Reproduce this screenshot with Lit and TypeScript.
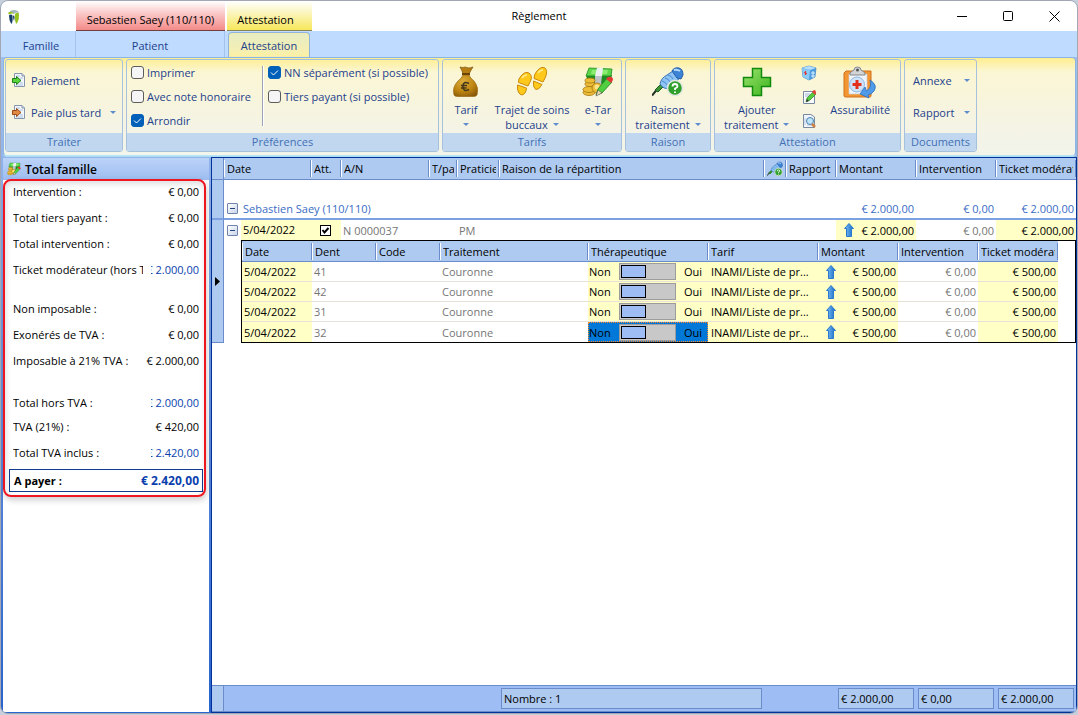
import { LitElement, html, css, svg, nothing } from "lit";
import { customElement, property } from "lit/decorators.js";
import { classMap } from "lit/directives/class-map.js";

const icons: Record<string, any> = {
  logo: svg`<svg width="12" height="16" viewBox="0 0 12 16">
    <path d="M1 4Q2 1 6 1Q10 1 11 4L8 3.500L6 5L3 3Z" fill="#a3b5bf"/>
    <path d="M0 4Q3 1.500 6 4.500Q3 4 1 5.500Z" fill="#95c11f"/>
    <path d="M7 5Q10 2.500 11 5Q11.500 10 9 14.500H8Q6 9 7 5Z" fill="#95c11f"/>
    <path d="M1 6.500Q3 4.500 4.500 6.500Q5 11 4 14.500H3Q1 11 1 6.500Z" fill="#123a63"/>
    <path d="M5 6.500Q6.500 6 6.500 9L6 12Q4.800 9 5 6.500Z" fill="#123a63"/></svg>`,
  pay: svg`<svg width="14" height="14" viewBox="0 0 14 14">
    <path d="M2.500.5H10L12.500 3V13.500H2.500Z" fill="#f4f8fd" stroke="#8796ad"/>
    <path d="M10 .5V3H12.500" fill="#cbd8ea" stroke="#8796ad"/>
    <path d="M4 3H8M8 5H11M8 10H11M4 12H11" stroke="#a9c2e2"/>
    <path d="M.500 5.500H4.500V3.500L9 7.500L4.500 11.500V9.500H.500Z" fill="#5ad43a" stroke="#207f18"/></svg>`,
  later: svg`<svg width="14" height="14" viewBox="0 0 14 14">
    <path d="M2.500.5H10L12.500 3V13.500H2.500Z" fill="#f4f8fd" stroke="#8796ad"/>
    <path d="M10 .5V3H12.500" fill="#cbd8ea" stroke="#8796ad"/>
    <path d="M4 3H8M8 5H11M8 10H11M4 12H11" stroke="#a9c2e2"/>
    <path d="M.500 5.500H4.500V3.500L9 7.500L4.500 11.500V9.500H.500Z" fill="#e08a45" stroke="#9a4a17"/></svg>`,
  bag: svg`<svg width="32" height="32" viewBox="0 0 32 32">
    <defs><radialGradient id="bg" cx=".4" cy=".3" r=".8"><stop offset="0" stop-color="#dcae3c"/><stop offset=".6" stop-color="#bd830f"/><stop offset="1" stop-color="#86560a"/></radialGradient></defs>
    <path d="M10 1Q13 2 15 1Q19 3 23 1Q21 4 19 8H13Q12 4 10 1Z" fill="#b57d12" stroke="#7d500a" stroke-width=".7"/>
    <path d="M13 9H19Q20 12 24 15Q29 21 27 29Q26 30.500 23 30.500H8Q5 30.500 4 29Q2 21 8 15Q12 12 13 9Z" fill="url(#bg)" stroke="#9a670c" stroke-width=".7"/>
    <path d="M12 8H20" stroke="#6b4407" stroke-width="2"/>
    <path d="M19 17.500Q13 14.500 13 20.500Q13 26.500 19 23.500M11 19.500H17M11 22H16.500" fill="none" stroke="#453719" stroke-width="1.500"/></svg>`,
  feet: svg`<svg width="32" height="32" viewBox="0 0 32 32">
    <g fill="#ffc91c" stroke="#c98a0a" stroke-width="1">
    <path d="M5 10Q9 5 13 7Q17 10 14.500 15L12 20L2.500 16.500Q2 13 5 10Z"/>
    <path d="M1.500 19L10.500 22Q10 28 6 29Q1 28 1.500 19Z"/>
    <path d="M21 5Q25 0 29 2Q32 5 29.500 11L27 16L18 12.500Q18 8 21 5Z"/>
    <path d="M17.500 15L26 18.500Q23 24 20 23.500Q17 22 17.500 15Z"/></g>
    <path d="M6 12Q8 9 11 9M22 7Q24 4 27 4" fill="none" stroke="#ffe98a" stroke-width="1.500"/></svg>`,
  cash: svg`<svg width="32" height="32" viewBox="0 0 32 32">
    <path d="M4 10L30 9L28 17L8 19Z" fill="#1d8c22"/>
    <path d="M7 2L30 3L29 10L4 10Z" fill="#5dd84a" stroke="#1f8a22" stroke-width=".8"/>
    <path d="M10 4H26L25 8H9Z" fill="#8ceb72"/>
    <path d="M15 2H21L20 10H13Z" fill="#eceff0"/><path d="M13 10H20L19 18H13Z" fill="#bcc3c6"/>
    <g fill="#edbd38" stroke="#a67610" stroke-width=".8">
    <ellipse cx="7" cy="26.500" rx="6" ry="3"/><ellipse cx="7" cy="23.500" rx="6" ry="3"/>
    <ellipse cx="8" cy="18" rx="5" ry="2.500"/><ellipse cx="8" cy="14.500" rx="5" ry="2.500"/><circle cx="15" cy="22" r="5"/></g>
    <circle cx="15" cy="21" r="2.500" fill="#ffe48a"/>
    <path d="M14 29L16 23L25 12L30 16L20 27Z" fill="#51cf40" stroke="#1d8022" stroke-width=".8"/>
    <path d="M14 30L16 24L20 27Z" fill="#e9d9b0" stroke="#555" stroke-width=".6"/>
    <path d="M24 13L26 11Q31 10 31 14L29 17Z" fill="#e23a34"/></svg>`,
  syringe: svg`<svg width="32" height="32" viewBox="0 0 32 32">
    <path d="M0 29.500L7 21" stroke="#222f22" stroke-width="2"/>
    <path d="M3 24L9 18L12 20L6 26Z" fill="#3c9434" stroke="#1b5c1d"/>
    <path d="M8 18Q9 12 15 9L21 5L29 11L17 22Q12 24 8 18Z" fill="#8ec4f4" stroke="#3b74b8"/>
    <path d="M20 5Q22 1 27 2Q31 3 31 9L29 13L25 12Z" fill="#3c83d6" stroke="#245ea8"/>
    <path d="M22 4Q25 3 28 5" fill="none" stroke="#b5dcfb" stroke-width="2"/>
    <path d="M13 12Q17 13 18 16M16 9Q20 10 21 13M10 15Q14 16 15 19" fill="none" stroke="#4a8bd0" stroke-width="1"/>
    <circle cx="23" cy="22" r="7.500" fill="#2fa02b" stroke="#e2e5e2" stroke-width="1.500"/>
    <path d="M20.500 20.500Q20.500 18 23 18Q25.500 18 25.500 20.500Q25.500 21.500 23 22.500V24M23 25.500V27" fill="none" stroke="#fff" stroke-width="1.800"/></svg>`,
  plus: svg`<svg width="32" height="32" viewBox="0 0 32 32">
    <defs><linearGradient id="pg" x1="0" y1="0" x2="1" y2="1"><stop offset="0" stop-color="#9be36c"/><stop offset="1" stop-color="#3cb31d"/></linearGradient></defs>
    <path d="M11.500 2.500H20.500V11.500H29.500V20.500H20.500V29.500H11.500V20.500H2.500V11.500H11.500Z" fill="url(#pg)" stroke="#118a0e" stroke-width="1.500"/></svg>`,
  cube: svg`<svg width="16" height="16" viewBox="0 0 16 16">
    <path d="M1 3L8 1L15 3L14 12L8 15L2 12Z" fill="#4d9be0" stroke="#2f78bf" stroke-width=".6"/>
    <path d="M1 3L8 1L15 3L9 5Z" fill="#b4defa"/><path d="M1 3L9 5L8 15L2 12Z" fill="#8ccaf6"/>
    <path d="M4.500 6V10M3 7.500L6 8.500" stroke="#e03838" stroke-width="1.200"/>
    <path d="M10 8H14M10 11H14M12 6V13" stroke="#d7effd"/></svg>`,
  edit: svg`<svg width="16" height="16" viewBox="0 0 16 16">
    <path d="M2.500 2.500H13.500V14.500H2.500Z" fill="#f7f9fc" stroke="#7788a0"/>
    <path d="M4 5H9M4 7H8" stroke="#9fb6d6"/>
    <path d="M5 13L6 9L12 3L15 5L9 11Z" fill="#58cc3f" stroke="#278a20" stroke-width=".7"/>
    <path d="M11 3L13 1Q15 1 15 4L14 6Z" fill="#df4337"/><path d="M5 13L6 10L8 12Z" fill="#333"/></svg>`,
  preview: svg`<svg width="16" height="16" viewBox="0 0 16 16">
    <path d="M2.500 1.500H10L13.500 4V14.500H2.500Z" fill="#f0f5fc" stroke="#7788a0"/>
    <path d="M4 5V12M6 12H11" stroke="#b8cbe4"/>
    <circle cx="9" cy="8" r="3.500" fill="#bfe3f8" stroke="#4b7fae"/>
    <path d="M11 11L14 14" stroke="#cf8040" stroke-width="2.500"/></svg>`,
  clip: svg`<svg width="34" height="34" viewBox="0 0 34 34">
    <path d="M3 5H28V30Q28 31 26 31H3Q1 31 1 30V7Z" fill="#f39530" stroke="#cf711c"/>
    <path d="M6 8H24V28H6Z" fill="#f1f5fa" stroke="#c9ccd2" stroke-width=".7"/>
    <path d="M7 9V7Q9 5 11 4Q11 1 14.500 1Q18 1 18 4Q20 5 22 7V9Z" fill="#d2d4d6" stroke="#85898d"/>
    <circle cx="14.500" cy="4" r="1.500" fill="#555"/>
    <circle cx="14" cy="18.500" r="7.500" fill="#cfe3f8" stroke="#8fb7e4"/>
    <path d="M14 14V23M9.500 18.500H18.500" stroke="#e2301b" stroke-width="3"/>
    <path d="M27 14Q35 19 31 25Q29 28 25 29L26 32L17 28L22 21L23.500 25Q29 22 27 14Z" fill="#4f9bea" stroke="#2b6dbb" stroke-width=".8"/></svg>`,
  up: svg`<svg width="10" height="14" viewBox="0 0 10 14">
    <defs><linearGradient id="ug"><stop offset="0" stop-color="#7cc3fb"/><stop offset="1" stop-color="#1767c2"/></linearGradient></defs>
    <path d="M5 .5L9.500 5.500H7.500V13.500H2.500V5.500H.500Z" fill="url(#ug)" stroke="#2a79cc"/></svg>`,
};

const sized = (name: string, size: number) =>
  html`<span class="scaled" style="--s:${size}px">${icons[name]}</span>`;
const caret = svg`<svg class="caret" width="6" height="3" viewBox="0 0 6 3"><path d="M0 0H6L3 3Z" fill="#5f8ccc"/></svg>`;

const base = css`
  * { box-sizing: border-box; }
  button, input, select { font: inherit; color: inherit; margin: 0; }
  button { border: 0; padding: 0; background: none; }
  svg { display: block; flex: none; }
  .scaled { display: block; flex: none; }
  .scaled svg { width: var(--s); height: var(--s); }
`;

@customElement("pay-ribbon")
class PayRibbon extends LitElement {
  static styles = [base, css`
    :host { display: block; padding: 0 1px 0 2px; color: #1d418c; }
    .ribbon { display: flex; gap: 3px; height: 99px; padding: 1px 1px 3px;
      border: 1px solid #8ab4e4; border-bottom-color: #b9e6f7; border-radius: 4px; box-shadow: 0 1px 1px #b0e0f4;
      background: linear-gradient(#feee90, #fbf6d4 14px, #f3f3e8 80px, #f2f5ea); }
    .group { display: flex; flex-direction: column; flex: none; border: 1px solid #a6c1dc; border-radius: 3px; overflow: hidden; }
    .body { flex: 1; display: flex; }
    .caption { height: 18px; line-height: 17px; text-align: center; background: #c1d7f0; color: #4270b4; }
    .traiter { width: 118px; } .prefs { width: 313px; } .tarifs { width: 180px; }
    .raison { width: 86px; } .attest { width: 187px; } .docs { width: 73px; }
    .stack { flex-direction: column; padding: 4px 6px; }
    .row { display: flex; align-items: center; height: 32px; width: 100%; white-space: nowrap; }
    .row .text { margin-left: 5px; }
    .docs .row .text { margin-left: 2px; }
    .row .caret { margin-left: auto; }
    .checks { display: flex; flex-direction: column; padding-left: 4px; }
    .checks.first { width: 135px; }
    .check { display: flex; align-items: center; gap: 3px; height: 24px; white-space: nowrap; }
    .check input { appearance: none; width: 13px; height: 13px; border: 1px solid #5c5c5c; border-radius: 3px; background: #f5f5f5; }
    .check input:checked { border-color: #005fb8; background: #005fb8
      url("data:image/svg+xml,%3Csvg xmlns='http://www.w3.org/2000/svg' viewBox='0 0 11 11'%3E%3Cpath d='M2 5.500L4.500 8L9 3.500' fill='none' stroke='white'/%3E%3C/svg%3E"); }
    .rule { width: 2px; margin: 6px 0 7px; border-left: 1px solid #9aa3b5; background: #fff; }
    .big { display: flex; flex-direction: column; align-items: center; padding-top: 6px; line-height: 15px; white-space: nowrap; }
    .big .pic { height: 36px; }
    .line { display: flex; align-items: center; gap: 5px; height: 15px; }
    .tarifs .body { padding: 0 2px; }
    .w42 { width: 42px; } .w90 { width: 90px; } .w84 { width: 84px; } .w80 { width: 80px; }
    .small { display: flex; flex-direction: column; width: 22px; padding-top: 1px; }
    .small button { display: flex; align-items: center; justify-content: center; height: 24px; }
  `];

  big(icon: string, width: string, first: string, second = "", arrow = true) {
    return html`<button class="big ${width}"><span class="pic">${icons[icon]}</span><span>${first}</span>
      <span class="line">${second ? html`<span>${second}</span>` : nothing}${arrow ? caret : nothing}</span></button>`;
  }
  check(label: string, on = false) {
    return html`<label class="check"><input type="checkbox" .checked=${on}>${label}</label>`;
  }
  row(label: string, arrow: boolean, icon = "") {
    return html`<button class="row">${icon ? icons[icon] : nothing}<span class="text">${label}</span>${arrow ? caret : nothing}</button>`;
  }
  render() {
    return html`<div class="ribbon">
      <section class="group traiter"><div class="body stack">
        ${this.row("Paiement", false, "pay")}${this.row("Paie plus tard", true, "later")}
      </div><div class="caption">Traiter</div></section>
      <section class="group prefs"><div class="body">
        <div class="checks first">${this.check("Imprimer")}${this.check("Avec note honoraire")}${this.check("Arrondir", true)}</div>
        <div class="rule"></div>
        <div class="checks">${this.check("NN séparément (si possible)", true)}${this.check("Tiers payant (si possible)")}</div>
      </div><div class="caption">Préférences</div></section>
      <section class="group tarifs"><div class="body">
        ${this.big("bag", "w42", "Tarif")}${this.big("feet", "w90", "Trajet de soins", "buccaux")}${this.big("cash", "w42", "e-Tar")}
      </div><div class="caption">Tarifs</div></section>
      <section class="group raison"><div class="body">
        ${this.big("syringe", "w84", "Raison", "traitement")}
      </div><div class="caption">Raison</div></section>
      <section class="group attest"><div class="body">
        ${this.big("plus", "w84", "Ajouter", "traitement")}
        <div class="small">
          <button aria-label="Mutuelle">${icons.cube}</button>
          <button aria-label="Modifier">${icons.edit}</button>
          <button aria-label="Aperçu">${icons.preview}</button>
        </div>
        ${this.big("clip", "w80", "Assurabilité", "", false)}
      </div><div class="caption">Attestation</div></section>
      <section class="group docs"><div class="body stack">
        ${this.row("Annexe", true)}${this.row("Rapport", true)}
      </div><div class="caption">Documents</div></section>
    </div>`;
  }
}

@customElement("family-total")
class FamilyTotal extends LitElement {
  static styles = [base, css`
    :host { display: flex; flex-direction: column; background: #fff; color: #000; }
    .head { display: flex; align-items: center; gap: 4px; height: 22px; margin: 0; padding-left: 4px;
      font-size: 12px; font-weight: 600; background: linear-gradient(#bcd3f8, #9dbdf0); }
    .frame { position: relative; padding: 0 6px 5px; }
    .mark { position: absolute; inset: -1px 3px 0 0; border: 2px solid #ee1620; border-radius: 8px;
      box-shadow: 1px 3px 6px #0003, inset 1px 3px 6px #0002; pointer-events: none; }
    .item { display: flex; justify-content: space-between; height: 26px; line-height: 24px; padding: 0 4px; white-space: nowrap; }
    .item.tight { height: 24px; }
    .gap-s { margin-top: 13px; } .gap-l { margin-top: 16px; }
    .label { max-width: 130px; overflow: hidden; }
    .value { display: flex; justify-content: flex-end; }
    a.value { width: 48px; overflow: hidden; color: #0a3fae; text-decoration: none; }
    .pay { display: flex; justify-content: space-between; height: 23px; line-height: 21px; margin-top: 2px; padding: 0 3px 0 4px;
      border: 1px solid #0f3c8e; font-weight: 700; }
    .pay .sum { color: #0a3fae; font-size: 12px; }
  `];
  item(label: string, value: string, link = false, cls = "") {
    return html`<div class="item ${cls}"><span class="label">${label}</span>${link
      ? html`<a class="value" href="#"><span>${value}</span></a>` : html`<span class="value">${value}</span>`}</div>`;
  }
  render() {
    return html`<h2 class="head">${sized("cash", 14)}Total famille</h2>
      <div class="frame">
        ${this.item("Intervention :", "€ 0,00")}
        ${this.item("Total tiers payant :", "€ 0,00")}
        ${this.item("Total intervention :", "€ 0,00")}
        ${this.item("Ticket modérateur (hors TVA) :", "€ 2.000,00", true)}
        ${this.item("Non imposable :", "€ 0,00", false, "gap-s")}
        ${this.item("Exonérés de TVA :", "€ 0,00")}
        ${this.item("Imposable à 21% TVA :", "€ 2.000,00")}
        ${this.item("Total hors TVA :", "€ 2.000,00", true, "gap-l tight")}
        ${this.item("TVA (21%) :", "€ 420,00")}
        ${this.item("Total TVA inclus :", "€ 2.420,00", true)}
        <div class="pay"><span>A payer :</span><span class="sum">€ 2.420,00</span></div>
        <div class="mark"></div>
      </div>`;
  }
}

@customElement("treatment-grid")
class TreatmentGrid extends LitElement {
  @property({ type: Array }) teeth = ["41", "42", "31", "32"];
  static styles = [base, css`
    :host { display: flex; flex-direction: column; background: #fff; border: 1px solid #00339a; color: #000; min-width: 0; }
    .scroll { flex: 1; min-height: 0; overflow: hidden; }
    table { border-collapse: separate; border-spacing: 0; table-layout: fixed; width: 100%; }
    th, td { padding: 0 2px; font-weight: 400; text-align: left; white-space: nowrap; overflow: hidden; }
    thead th { height: 22px; padding: 0 3px; border-bottom: 1px solid #6a8ccb;
      background: linear-gradient(#6a8ccb, #6a8ccb) right 0 center / 1px 17px no-repeat,
        linear-gradient(#fff, #fff) left 0 center / 1px 17px no-repeat, #aecaf0; }
    .clip { display: block; overflow: hidden; }
    .inner thead th { height: 21px; }
    .sel { padding: 0; border-right: 1px solid #6a8ccb; background: #aecaf0; vertical-align: middle; text-align: center; }
    thead .sel { background: #aecaf0; }
    .sel.bar { border-bottom: 2px solid #7ba1e2; }
    .sel.end { border-bottom: 1px solid #6a8ccb; }
    .sel svg { margin: 0 auto; }
    .group td { height: 40px; border-bottom: 2px solid #7ba1e2; padding-top: 18px; color: #3a6cc4; }
    .group td.sel { padding-top: 0; }
    .master td { height: 20px; }
    .num { text-align: right; }
    td.num { padding-right: 2px; }
    .exp, .date { display: flex; align-items: center; gap: 5px; padding-left: 1px; }
    .minus { display: block; flex: none; width: 11px; height: 11px; border: 1px solid #6f83ad; border-radius: 1px;
      background: linear-gradient(#26457c, #26457c) center / 5px 1px no-repeat, linear-gradient(135deg, #fff, #c9d5ea); }
    .y { background: #ffffc6; }
    .grey { color: #767676; }
    .date { gap: 3px; height: 20px; padding-left: 3px; }
    .date .y { flex: 1; line-height: 20px; padding-left: 2px; }
    td.flush { padding-left: 0; padding-right: 0; }
    .att input { appearance: none; display: block; width: 11px; height: 11px; margin: 0 0 0 7px; border: 1px solid #000; background: #fff
      url("data:image/svg+xml,%3Csvg xmlns='http://www.w3.org/2000/svg' viewBox='0 0 9 9'%3E%3Cpath d='M1.500 4L3.500 6.500L7.500 2' fill='none' stroke='black' stroke-width='2'/%3E%3C/svg%3E"); }
    .amount { display: flex; align-items: center; justify-content: space-between; padding-left: 6px; }
    .box { padding: 0 0 0 17px; border: 0; }
    .inner { border: 1px solid #000; padding-right: 17px; }
    .inner td { height: 20px; border-bottom: 1px solid #e6e2da; padding: 0 2px; }
    .inner tr:last-child td { border-bottom: 0; }
    .inner td.pad { padding-left: 3px; }
    .inner td.switch { padding: 0; }
    .toggle { display: flex; align-items: center; height: 19px; padding: 0 5px 0 0; border: 1px solid transparent; }
    .toggle span:last-child { margin-left: auto; }
    .toggle input { appearance: none; display: flex; align-items: center; flex: none; width: 57px; height: 17px; margin-left: 8px; padding: 1px; border: 1px solid #9c9c9c; background: #c8c8c8; }
    .toggle input::before { content: ""; flex: none; box-sizing: border-box; width: 25px; height: 13px; border: 1px solid #000; background: #9fbdf5; }
    .active .toggle { background: #0078d7; border: 1px dotted #ff8728; height: 20px; }
    .foot { display: grid; grid-template-columns: 12px 275px 1fr 72px 80px 80px 80px; flex: none; height: 27px;
      border-top: 1px solid #6a8ccb; border-bottom: 1px solid #6a8ccb; background: #9fbdf5; }
    .foot .corner { background: #aecaf0; border-right: 1px solid #6a8ccb; }
    .total { margin: 2px; padding-left: 2px; line-height: 19px; border: 1px solid #6a8ccb; background: #aecaf0; }
  `];
  render() {
    const amount = (v: string) => html`<div class="amount">${icons.up}<span>${v}</span></div>`;
    const head = (label: string) => html`<th><span class="clip">${label}</span></th>`;
    return html`<div class="scroll"><table>
      <colgroup><col style="width:12px"><col style="width:87px"><col style="width:30px"><col style="width:88px"><col style="width:28px"><col style="width:42px"><col>
        <col style="width:22px"><col style="width:50px"><col style="width:80px"><col style="width:80px"><col style="width:80px"></colgroup>
      <thead><tr><th class="sel"></th>${["Date", "Att.", "A/N", "T/patient", "Praticien", "Raison de la répartition"].map(head)}
        <th aria-label="Raison">${sized("syringe", 16)}</th>${["Rapport", "Montant", "Intervention", "Ticket modérateur"].map(head)}</tr></thead>
      <tbody>
        <tr class="group"><td class="sel bar"></td><td colspan="8"><div class="exp"><button class="minus" aria-label="Réduire"></button>Sebastien Saey (110/110)</div></td>
          <td class="num">€ 2.000,00</td><td class="num">€ 0,00</td><td class="num">€ 2.000,00</td></tr>
        <tr class="master"><td class="sel end" rowspan="2"><svg width="5" height="9" viewBox="0 0 5 9"><path d="M0 0L5 4.500L0 9Z"/></svg></td>
          <td class="flush"><div class="date"><button class="minus" aria-label="Réduire"></button><span class="y">5/04/2022</span></div></td>
          <td class="y att"><input type="checkbox" checked aria-label="Attestation"></td><td class="grey">N 0000037</td><td></td><td class="grey">PM</td><td></td><td></td><td></td>
          <td class="y num">${amount("€ 2.000,00")}</td><td class="num grey">€ 0,00</td><td class="y num">€ 2.000,00</td></tr>
        <tr><td class="box" colspan="11"><div class="inner"><table>
          <colgroup><col style="width:70px"><col style="width:64px"><col style="width:64px"><col><col style="width:120px"><col style="width:110px"><col style="width:80px"><col style="width:80px"><col style="width:80px"></colgroup>
          <thead><tr>${["Date", "Dent", "Code", "Traitement", "Thérapeutique", "Tarif", "Montant", "Intervention", "Ticket modérateur"].map(head)}</tr></thead>
          <tbody>${this.teeth.map((t, i) => html`<tr class=${classMap({ active: i === 3 })}>
            <td class="y">5/04/2022</td><td class="grey">${t}</td><td></td><td class="grey">Couronne</td>
            <td class="y switch"><label class="toggle"><span>Non</span><input type="checkbox" role="switch"><span>Oui</span></label></td>
            <td class="y pad">INAMI/Liste de pr...</td><td class="y num">${amount("€ 500,00")}</td><td class="num grey">€ 0,00</td><td class="y num">€ 500,00</td></tr>`)}
          </tbody></table></div></td></tr>
      </tbody></table></div>
      <div class="foot"><span class="corner"></span><span></span><span class="total">Nombre : 1</span><span></span>
        <span class="total">€ 2.000,00</span><span class="total">€ 0,00</span><span class="total">€ 2.000,00</span></div>`;
  }
}

@customElement("app-root")
class AppRoot extends LitElement {
  static styles = [base, css`
    :host { display: block; height: 100vh; box-sizing: border-box; background: #c6cfdc; font: 11px/15px "Open Sans", "Noto Sans", sans-serif; color: #000; padding-bottom: 1px; }
    .window { display: flex; flex-direction: column; height: 100%; border: 1px solid #a3a7b3; border-radius: 8px; overflow: hidden; background: linear-gradient(#a8c6f2, #90b2ea 160px, #2a64cc 700px); }
    .title { display: grid; grid-template-columns: 1fr auto 1fr; height: 30px; background: #fff; align-items: center; }
    .left { display: flex; height: 30px; }
    .brand { width: 75px; padding: 8px 0 0 7px; }
    .ctx { display: flex; align-items: flex-end; justify-content: center; height: 30px; padding-bottom: 3px; border-bottom: 1px solid #70403c; }
    .ctx.red { width: 149px; margin-right: 2px; background: linear-gradient(#fff, #fbcaca 12px, #f38a88); }
    .ctx.yellow { width: 85px; padding-right: 8px; border-color: #8a8352; background: linear-gradient(#fff, #fbf5bd 12px, #f7e75a); }
    h1 { margin: 0; padding-bottom: 1px; font-size: 11px; font-weight: 400; }
    .ctl { display: flex; justify-content: flex-end; }
    .ctl button { display: flex; align-items: center; justify-content: center; width: 46px; height: 28px; }
    .tabs { display: flex; height: 26px; background: #bfdbff; }
    .tab { display: flex; align-items: center; justify-content: center; height: 26px; padding-top: 2px; color: #1d418c; border-right: 1px solid #a3c3ee; }
    .tab.famille { width: 75px; padding-left: 6px; } .tab.patient { width: 149px; }
    .tab.active { width: 82px; height: 25px; margin: 1px 0 0 3px; padding-top: 1px; border: 1px solid #8fb5de; border-bottom: 0; border-radius: 4px 4px 0 0; background: linear-gradient(#e5ecc4, #f4efb4 70%, #fdf0a0); box-shadow: inset 0 0 0 1px #f3ecac; }
    .main { flex: 1; min-height: 0; display: flex; gap: 2px; padding: 1px 0 0 2px; }
    family-total { width: 206px; flex: none; margin: 1px 0; }
    treatment-grid { flex: 1; }
  `];
  render() {
    return html`<div class="window">
      <header class="title">
        <div class="left"><span class="brand">${icons.logo}</span><span class="ctx red">Sebastien Saey (110/110)</span><span class="ctx yellow">Attestation</span></div>
        <h1>Règlement</h1>
        <div class="ctl">
          <button aria-label="Réduire"><svg width="10" height="11"><path d="M0 5.500H10" stroke="#000"/></svg></button>
          <button aria-label="Agrandir"><svg width="11" height="11"><rect x=".5" y=".5" width="9" height="9" rx="1" fill="none" stroke="#000"/></svg></button>
          <button aria-label="Fermer"><svg width="11" height="11"><path d="M.500.5L10.500 10.500M10.500.5L.500 10.500" stroke="#000"/></svg></button>
        </div>
      </header>
      <nav class="tabs"><button class="tab famille">Famille</button><button class="tab patient">Patient</button><button class="tab active">Attestation</button></nav>
      <pay-ribbon></pay-ribbon>
      <div class="main"><family-total></family-total><treatment-grid></treatment-grid></div>
    </div>`;
  }
}
